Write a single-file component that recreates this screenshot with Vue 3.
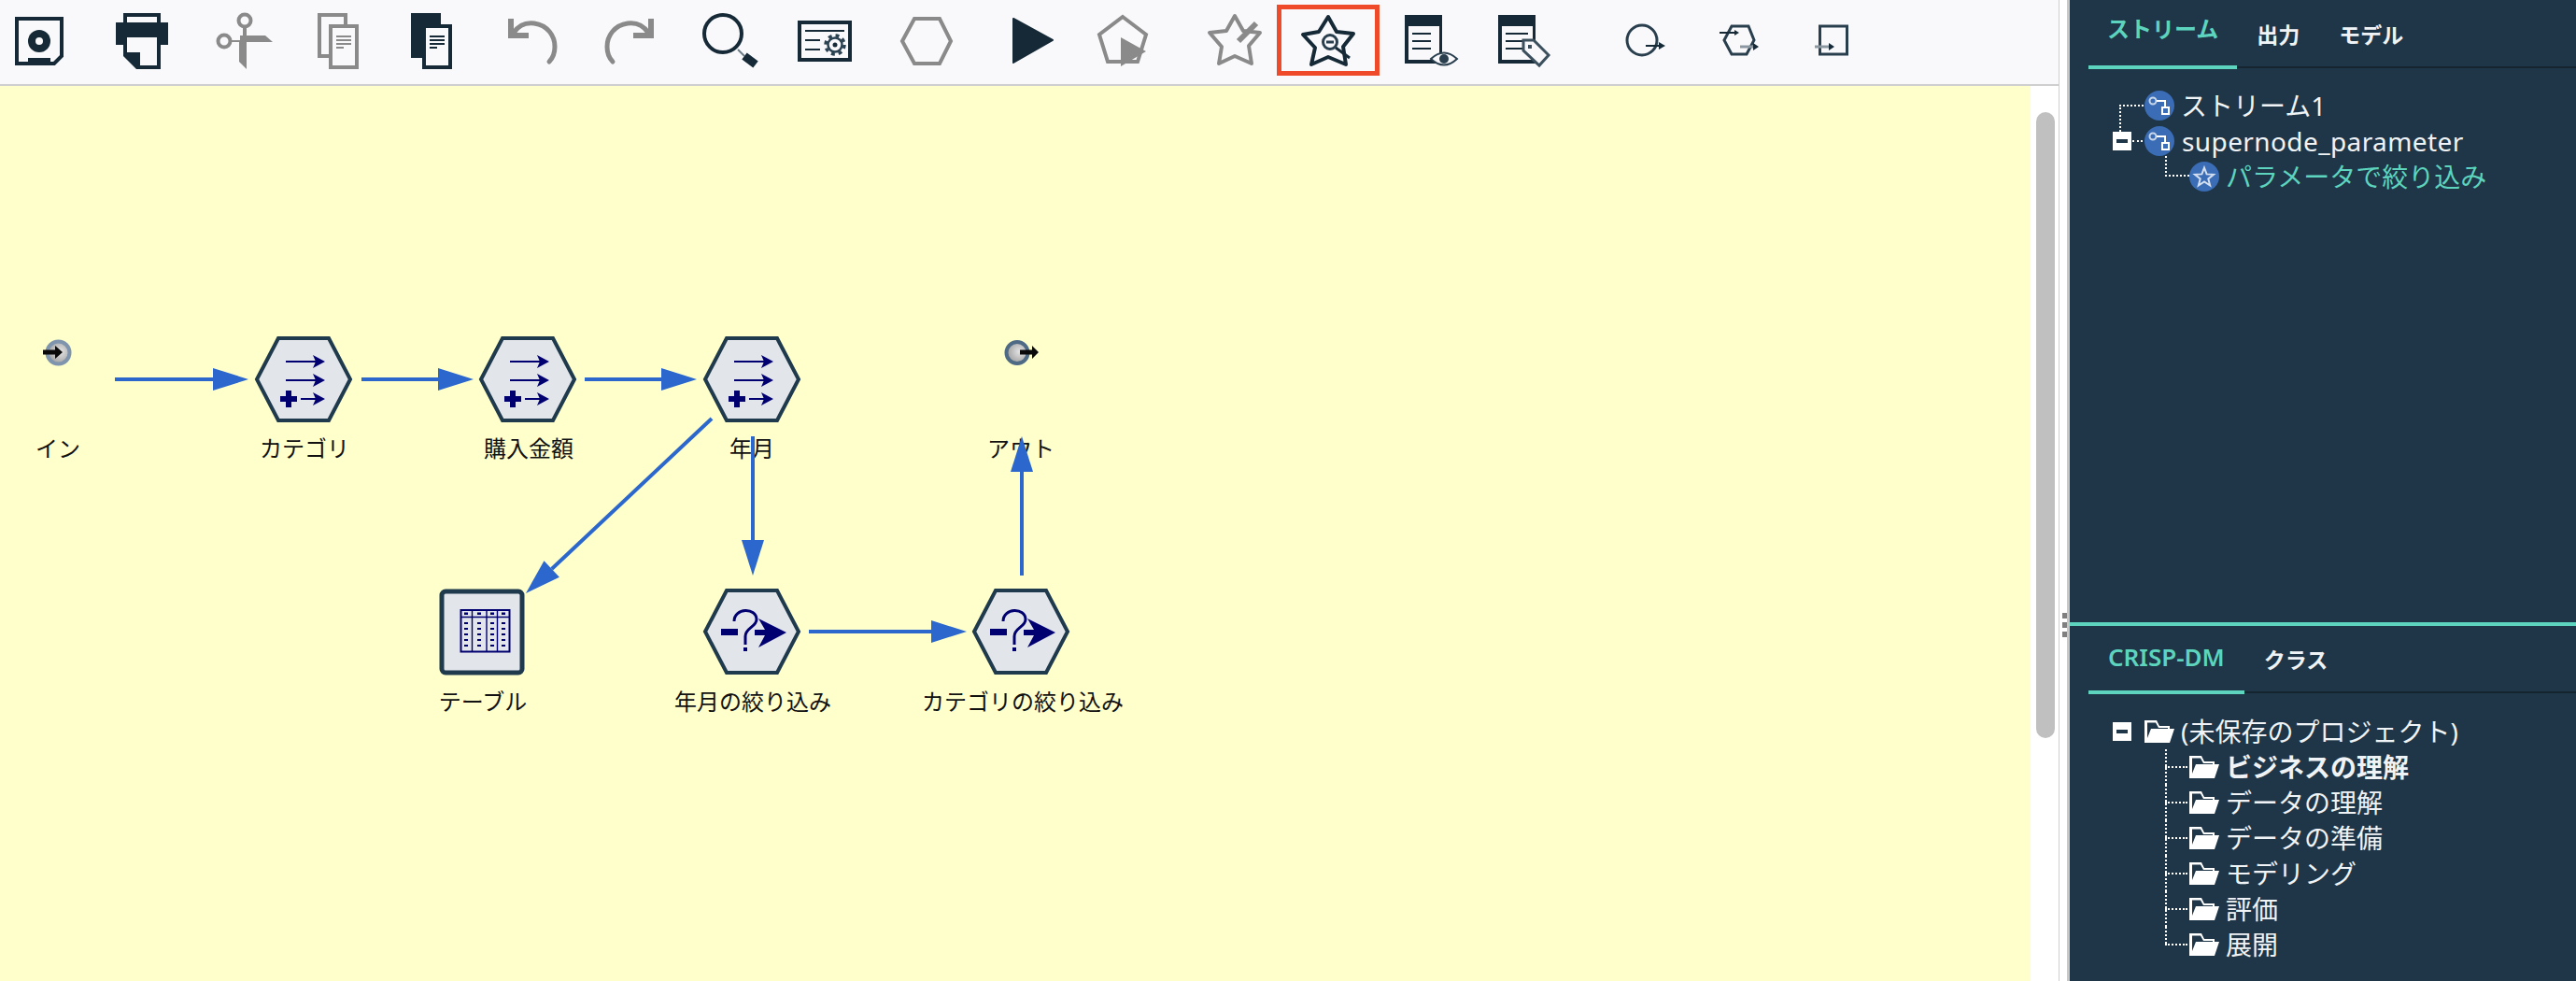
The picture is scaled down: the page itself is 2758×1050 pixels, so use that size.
<script setup>
const fieldNodes = [{ x: 325, y: 406 }, { x: 565, y: 406 }, { x: 805, y: 406 }]
const filterNodes = [{ x: 805, y: 676 }, { x: 1093, y: 676 }]

const labels = [
  { text: 'イン', x: 62, y: 489 },
  { text: 'カテゴリ', x: 326, y: 489 },
  { text: '購入金額', x: 566, y: 489 },
  { text: '年月', x: 805, y: 489 },
  { text: 'アウト', x: 1093, y: 489 },
  { text: 'テーブル', x: 517, y: 760 },
  { text: '年月の絞り込み', x: 806, y: 760 },
  { text: 'カテゴリの絞り込み', x: 1095, y: 760 }
]

// line runs from the tail to the base of the head, head length 38
const arrows = [
  [123, 406, 266, 406],
  [387, 406, 507, 406],
  [626, 406, 746, 406],
  [762, 448, 563, 635],
  [806, 467, 806, 616],
  [866, 676, 1035, 676],
  [1094, 616, 1094, 467]
].map(([x1, y1, x2, y2]) => {
  const len = Math.hypot(x2 - x1, y2 - y1)
  const ux = (x2 - x1) / len
  const uy = (y2 - y1) / len
  const bx = x2 - ux * 38
  const by = y2 - uy * 38
  return {
    x1,
    y1,
    bx,
    by,
    head: `${x2},${y2} ${bx - uy * 12},${by + ux * 12} ${bx + uy * 12},${by - ux * 12}`
  }
})

const tableRows = [667, 673, 679, 685, 691]
const tableCols = [499, 513, 527, 539]

const phases = [
  { name: 'ビジネスの理解', bold: true },
  { name: 'データの理解' },
  { name: 'データの準備' },
  { name: 'モデリング' },
  { name: '評価' },
  { name: '展開' }
]
</script>

<template>
  <div class="app">
    <div class="main">
      <div class="toolbar">
        <!-- save -->
        <svg class="tool i-disk" viewBox="14 0 56 90">
          <path class="dark-line" d="M18 20H66V60L58 68H18Z" />
          <circle cx="42" cy="44" r="12" class="dark" />
          <circle cx="42" cy="44" r="4" fill="#f9f9fc" />
          <rect x="30" y="62" width="24" height="6" class="dark" />
        </svg>
        <!-- print -->
        <svg class="tool i-print" viewBox="122 0 60 90">
          <path class="dark-line" d="M134 26V16H170V26" />
          <rect x="124" y="24" width="56" height="24" class="dark" />
          <path d="M132 40H172V74H146L132 60Z" class="dark" />
          <path d="M136 40H168V70H150V56H136Z" fill="#f9f9fc" />
        </svg>
        <!-- cut -->
        <svg class="tool i-cut" viewBox="230 0 64 90">
          <circle cx="262" cy="22" r="6.5" class="gray-line" />
          <circle cx="240" cy="44" r="6.5" class="gray-line" />
          <path d="M260 29H264V40H260ZM247 43H258V45H247Z" class="gray" />
          <path d="M257 38H284L292 45H257Z" class="gray" />
          <path d="M256 44H264V74L256 66Z" class="gray" />
        </svg>
        <!-- copy -->
        <svg class="tool i-copy" viewBox="338 0 48 90">
          <path class="gray-line" d="M370 26V16H342V60H354" />
          <rect x="354" y="28" width="28" height="44" class="gray-line" />
          <path class="gray-thin" d="M360 39H376M360 43H376M360 47H376M360 51H368" />
        </svg>
        <!-- paste -->
        <svg class="tool i-paste" viewBox="438 0 48 90">
          <rect x="440" y="14" width="32" height="48" class="dark" />
          <rect x="454" y="28" width="28" height="44" fill="#f9f9fc" stroke="#152936" stroke-width="4" />
          <path class="dark-thin" d="M460 39H476M460 43H476M460 47H476M460 51H468" />
        </svg>
        <!-- undo -->
        <svg class="tool i-undo" viewBox="542 0 58 90">
          <path d="M544 20H550V35H566V41H544Z" class="gray" />
          <path class="gray-round" d="M550 35C556 26 564 24 572 25C586 27 594 38 594 50C594 56 592 62 588 66" />
        </svg>
        <!-- redo -->
        <svg class="tool i-redo" viewBox="644 0 58 90">
          <path d="M700 20H694V35H678V41H700Z" class="gray" />
          <path class="gray-round" d="M694 35C688 26 680 24 672 25C658 27 650 38 650 50C650 56 652 62 656 66" />
        </svg>
        <!-- find -->
        <svg class="tool i-find" viewBox="750 0 66 90">
          <circle cx="774" cy="36" r="20" class="dark-line" />
          <path d="M790 53L797 60" stroke="#6b7b86" stroke-width="2" />
          <path d="M797 60L809 69" stroke="#152936" stroke-width="9" />
        </svg>
        <!-- stream properties -->
        <svg class="tool i-props" viewBox="852 0 62 90">
          <rect x="856" y="24" width="54" height="40" class="dark-line" />
          <path class="dark-thin" d="M862 33H904M862 43H878M862 53H878" />
          <circle cx="894" cy="48" r="10" fill="none" stroke="#2b4252" stroke-width="3.5" stroke-dasharray="3.9 4" />
          <circle cx="894" cy="48" r="7.5" fill="none" stroke="#2b4252" stroke-width="2.5" />
          <circle cx="894" cy="48" r="2.5" class="dark" />
        </svg>
        <!-- hexagon -->
        <svg class="tool i-hex" viewBox="962 0 60 90">
          <path class="gray-line" d="M966 44L979 20H1006L1018 44L1006 68H979Z" />
        </svg>
        <!-- run -->
        <svg class="tool i-run" viewBox="1082 0 48 90">
          <path d="M1085 20L1127 43L1085 67Z" class="dark" stroke="#152936" stroke-width="2" stroke-linejoin="round" />
        </svg>
        <!-- run selection -->
        <svg class="tool i-runsel" viewBox="1172 0 58 90">
          <path class="gray-line" d="M1202 18L1227 37L1218 66H1186L1177 37Z" />
          <path d="M1200 40L1227 55L1200 71Z" class="gray" />
        </svg>
        <!-- create supernode -->
        <svg class="tool i-wand" viewBox="1290 0 64 90">
          <path class="gray-star" d="M1322 17L1331 33L1349 35L1337 49L1340 68L1322 60L1305 68L1308 50L1295 35L1313 33Z" />
          <path d="M1326 44L1345 25" stroke="#8a8a8a" stroke-width="6" />
        </svg>
        <!-- zoom into supernode, marked with the red frame -->
        <div class="active-tool">
          <svg viewBox="1372 10 100 66">
            <path class="dark-star" d="M1422 18L1431 34L1449 36L1438 50L1441 69L1422 61L1404 69L1408 51L1395 37L1412 34Z" />
            <circle cx="1424" cy="45" r="7.5" fill="#f9f9fc" stroke="#2a3f4e" stroke-width="3" />
            <path d="M1420 45H1428" stroke="#2a3f4e" stroke-width="3" />
            <path d="M1430 51L1445 62" stroke="#152936" stroke-width="3" />
          </svg>
        </div>
        <!-- preview -->
        <svg class="tool i-doceye" viewBox="1502 0 60 90">
          <rect x="1504" y="16" width="40" height="52" class="dark" />
          <rect x="1508" y="28" width="33" height="36" fill="#f9f9fc" />
          <path class="dark-thin" d="M1512 36H1532M1512 44H1532M1512 52H1532" />
          <path d="M1532 63Q1546 50 1560 63Q1546 76 1532 63Z" fill="#f9f9fc" stroke="#2a3f4e" stroke-width="2" />
          <circle cx="1546" cy="63" r="5" fill="#2a3f4e" />
        </svg>
        <!-- annotation -->
        <svg class="tool i-doctag" viewBox="1602 0 60 90">
          <rect x="1604" y="16" width="40" height="52" class="dark" />
          <rect x="1608" y="28" width="33" height="36" fill="#f9f9fc" />
          <path class="dark-thin" d="M1612 36H1636M1612 44H1630M1612 52H1630" />
          <path d="M1631 43H1642L1658 59L1648 70L1631 54Z" fill="#f9f9fc" stroke="#3b4f5d" stroke-width="3" />
          <rect x="1636" y="48" width="4" height="4" fill="#3b4f5d" />
        </svg>
        <!-- supernode in/out tools -->
        <svg class="tool i-in" viewBox="1738 0 48 90">
          <circle cx="1758" cy="43" r="16" fill="none" stroke="#2a3f4e" stroke-width="3" />
          <path d="M1762 49H1778" stroke="#152936" stroke-width="2" />
          <path d="M1776 45L1783 49L1776 53Z" class="dark" />
        </svg>
        <svg class="tool i-hexio" viewBox="1838 0 48 90">
          <path d="M1846 43L1854 28H1872L1878 43L1870 58H1854Z" fill="none" stroke="#2a3f4e" stroke-width="3" />
          <path d="M1841 35H1859" stroke="#152936" stroke-width="2" />
          <path d="M1857 32L1862 35L1857 38Z" class="dark" />
          <path d="M1863 50H1878" stroke="#8c98a1" stroke-width="3" />
          <path d="M1877 46L1883 50L1877 54Z" class="dark" />
        </svg>
        <svg class="tool i-rectio" viewBox="1941 0 42 90">
          <rect x="1948.5" y="28" width="29" height="30" fill="none" stroke="#2a3f4e" stroke-width="3" />
          <path d="M1943 50H1958" stroke="#8c98a1" stroke-width="3" />
          <path d="M1958 46L1964 50L1958 54Z" class="dark" />
        </svg>
      </div>

      <div class="work-area">
        <div class="canvas">
          <svg class="stream" viewBox="0 92 2174 958">
            <defs>
              <radialGradient id="ball" cx="0.6" cy="0.45" r="0.65">
                <stop offset="0" stop-color="#e4e4e4" />
                <stop offset="1" stop-color="#989898" />
              </radialGradient>
            </defs>

            <text v-for="l in labels" :key="l.text" class="node-label" :x="l.x" :y="l.y">{{ l.text }}</text>

            <!-- input terminal -->
            <circle cx="62.5" cy="377.5" r="12" fill="url(#ball)" stroke="#7f95ad" stroke-width="4" />
            <path d="M46 374.5H59V370L67 377L59 384V379.5H46Z" fill="#0a0a0a" />
            <!-- output terminal -->
            <circle cx="1089" cy="377.5" r="11.5" fill="url(#ball)" stroke="#4e6a85" stroke-width="4" />
            <path d="M1092 374.5H1105V370L1112 377L1105 384V379.5H1092Z" fill="#0a0a0a" />

            <!-- field derive nodes -->
            <g v-for="n in fieldNodes" :key="n.x" :transform="`translate(${n.x} ${n.y})`">
              <polygon class="node" points="-50,0 -27,-44 27,-44 50,0 27,44 -27,44" />
              <g class="glyph-line">
                <path d="M-19 -19H20M-19 1H20M-3 21H20" />
              </g>
              <path class="glyph" d="M10 -26L23 -19L10 -12L13 -19ZM10 -6L23 1L10 8L13 1ZM10 14L23 21L10 28L13 21Z" />
              <path class="glyph" d="M-25 18H-19V12H-13V18H-7V24H-13V30H-19V24H-25Z" />
            </g>

            <!-- table node -->
            <rect class="node table-node" x="473" y="633" width="86" height="87" rx="4" />
            <rect x="493.5" y="653" width="52" height="44.5" fill="none" stroke="#000070" stroke-width="2" />
            <path d="M493 660.5H546M505.5 653V697M521 653V697M532.5 653V697" stroke="#000070" stroke-width="1.4" />
            <g v-for="c in tableCols" :key="c">
              <rect :x="c - 2" y="655.5" width="4" height="2.5" fill="#000070" />
              <rect v-for="r in tableRows" :key="r" :x="c - 2" :y="r - 1" width="4" height="2" fill="#000070" />
            </g>

            <!-- filter nodes -->
            <g v-for="n in filterNodes" :key="n.x" :transform="`translate(${n.x} ${n.y})`">
              <polygon class="node" points="-50,0 -27,-44 27,-44 50,0 27,44 -27,44" />
              <path class="glyph" d="M-33 -3H-15V4H-33Z" />
              <path d="M-19 -11C-19 -26 5 -26 5 -13C5 -5 -7 -4 -7 5V14" fill="none" stroke="#000070" stroke-width="3" />
              <rect class="glyph" x="-9" y="17" width="4" height="4" />
              <path class="glyph" d="M7 -14L37 1L7 17L14 4H3V-2H14Z" />
            </g>

            <!-- links sit on top of the labels -->
            <g v-for="a in arrows" :key="a.head">
              <line class="link" :x1="a.x1" :y1="a.y1" :x2="a.bx" :y2="a.by" />
              <polygon class="link-head" :points="a.head" />
            </g>
          </svg>
        </div>
        <div class="scroll-track">
          <div class="scroll-thumb"></div>
        </div>
      </div>
    </div>

    <div class="divider">
      <span class="grip"></span>
      <span class="grip"></span>
      <span class="grip"></span>
    </div>

    <div class="side">
      <div class="pane pane-top">
        <div class="tabs">
          <span class="tab active">ストリーム</span>
          <span class="tab">出力</span>
          <span class="tab">モデル</span>
        </div>
        <div class="tree stream-tree">
          <div class="row lvl0 link-down">
            <svg class="ico" viewBox="0 0 32 32">
              <circle cx="16" cy="16" r="16" fill="#3a6db5" />
              <circle cx="9" cy="11" r="3.5" fill="none" stroke="#c8d6ea" stroke-width="2" />
              <path d="M13 11H22V18M19 18H26V25H19Z" fill="none" stroke="#fff" stroke-width="2" />
            </svg>
            <span>ストリーム1</span>
          </div>
          <div class="row lvl0">
            <span class="toggle"></span>
            <span class="toggle-dots"></span>
            <svg class="ico" viewBox="0 0 32 32">
              <circle cx="16" cy="16" r="16" fill="#3a6db5" />
              <circle cx="9" cy="11" r="3.5" fill="none" stroke="#c8d6ea" stroke-width="2" />
              <path d="M13 11H22V18M19 18H26V25H19Z" fill="none" stroke="#fff" stroke-width="2" />
            </svg>
            <span class="latin">supernode_parameter</span>
          </div>
          <div class="row lvl1 elbow current">
            <svg class="ico" viewBox="0 0 32 32">
              <circle cx="16" cy="16" r="16" fill="#3a6db5" />
              <path d="M16 6.5L18.6 13.4L26 13.8L20.3 18.4L22.2 25.5L16 21.5L9.8 25.5L11.7 18.4L6 13.8L13.4 13.4Z" fill="none" stroke="#d5dff0" stroke-width="2" />
            </svg>
            <span>パラメータで絞り込み</span>
          </div>
        </div>
      </div>

      <div class="pane pane-bottom">
        <div class="tabs">
          <span class="tab active crisp">CRISP-DM</span>
          <span class="tab">クラス</span>
        </div>
        <div class="tree crisp-tree">
          <div class="row lvl0">
            <span class="toggle"></span>
            <svg class="ico folder" viewBox="0 0 32 24">
              <path fill="#fff" d="M0 0H13L16 6H27V9H32L27 24H0Z" />
              <path fill="#1f3649" d="M3 2.5H12L15 8H25V9H7L3 19Z" />
            </svg>
            <span>(未保存のプロジェクト)</span>
          </div>
          <div v-for="p in phases" :key="p.name" class="row lvl1 branch" :class="{ strong: p.bold }">
            <svg class="ico folder" viewBox="0 0 32 24">
              <path fill="#fff" d="M0 0H13L16 6H27V9H32L27 24H0Z" />
              <path fill="#1f3649" d="M3 2.5H12L15 8H25V9H7L3 19Z" />
            </svg>
            <span>{{ p.name }}</span>
          </div>
        </div>
      </div>
    </div>
  </div>
</template>

<style>
html,
body {
  margin: 0;
  background: #fff;
}
</style>

<style scoped>
.app {
  display: flex;
  width: 2758px;
  height: 1050px;
  overflow: hidden;
  font-family: "Noto Sans", "Noto Sans CJK JP", sans-serif;
}

.main {
  display: flex;
  flex-direction: column;
  flex: 0 0 2204px;
}

.toolbar {
  display: flex;
  align-items: flex-start;
  flex: 0 0 90px;
  background: #f9f9fc;
  border-bottom: 2px solid #cfcfcf;
}

.tool {
  flex: none;
  height: 90px;
}

.i-disk { width: 56px; margin-left: 14px; }
.i-print { width: 60px; margin-left: 52px; }
.i-cut { width: 64px; margin-left: 48px; }
.i-copy { width: 48px; margin-left: 44px; }
.i-paste { width: 48px; margin-left: 52px; }
.i-undo { width: 58px; margin-left: 56px; }
.i-redo { width: 58px; margin-left: 44px; }
.i-find { width: 66px; margin-left: 48px; }
.i-props { width: 62px; margin-left: 36px; }
.i-hex { width: 60px; margin-left: 48px; }
.i-run { width: 48px; margin-left: 60px; }
.i-runsel { width: 58px; margin-left: 42px; }
.i-wand { width: 64px; margin-left: 60px; }
.i-doceye { width: 60px; margin-left: 25px; }
.i-doctag { width: 60px; margin-left: 40px; }
.i-in { width: 48px; margin-left: 76px; }
.i-hexio { width: 48px; margin-left: 52px; }
.i-rectio { width: 42px; margin-left: 55px; }

.active-tool {
  flex: none;
  box-sizing: border-box;
  width: 110px;
  height: 76px;
  margin: 5px 0 0 13px;
  border: 5px solid #ef4a2a;
}

.active-tool svg {
  display: block;
  width: 100px;
  height: 66px;
}

.dark { fill: #152936; }
.gray { fill: #8a8a8a; }

.dark-line,
.gray-line {
  fill: none;
  stroke-width: 4;
}

.dark-line { stroke: #152936; }
.gray-line { stroke: #8a8a8a; }

.dark-thin,
.gray-thin {
  fill: none;
  stroke-width: 2;
}

.dark-thin { stroke: #152936; }
.gray-thin { stroke: #8a8a8a; }

.gray-round {
  fill: none;
  stroke: #8a8a8a;
  stroke-width: 5;
  stroke-linecap: round;
}

.gray-star,
.dark-star {
  fill: none;
  stroke-width: 4;
  stroke-linejoin: round;
}

.gray-star { stroke: #8a8a8a; }
.dark-star { stroke: #152936; }

.work-area {
  display: flex;
  flex: 1;
  min-height: 0;
}

.canvas {
  flex: 0 0 2174px;
  background: #ffffcb;
}

.stream {
  display: block;
  width: 2174px;
  height: 958px;
}

.node-label {
  font-family: "Noto Sans CJK JP", sans-serif;
  font-size: 24px;
  fill: #111;
  text-anchor: middle;
}

.node {
  fill: #e2e5ea;
  stroke: #1f3a4d;
  stroke-width: 4;
}

.table-node {
  stroke-width: 5;
}

.glyph {
  fill: #000070;
}

.glyph-line path {
  fill: none;
  stroke: #000070;
  stroke-width: 2;
}

.link {
  stroke: #2b67cc;
  stroke-width: 4;
}

.link-head {
  fill: #2b67cc;
}

.scroll-track {
  flex: 1;
  padding: 28px 4px 0 6px;
}

.scroll-thumb {
  height: 670px;
  background: #c0c0c0;
  border-radius: 10px;
}

.divider {
  position: relative;
  box-sizing: border-box;
  flex: 0 0 12px;
  border-left: 1px solid #cfcfcf;
  border-right: 3px solid #c8c8c8;
}

.grip {
  display: block;
  position: relative;
  top: 656px;
  left: 3px;
  width: 5px;
  height: 6px;
  margin-bottom: 4px;
  background: #808080;
}

.side {
  display: flex;
  flex-direction: column;
  flex: 1;
  background: #1f3649;
  color: #f0f3f5;
}

.pane-top {
  flex: 0 0 666px;
}

.pane-bottom {
  flex: 1;
  border-top: 4px solid #5dd4bd;
}

.tabs {
  display: flex;
  align-items: flex-end;
  margin-left: 20px;
  height: 72px;
  border-bottom: 2px solid #14252f;
  box-sizing: content-box;
  font-size: 23px;
  font-weight: 700;
}

.pane-top .tabs {
  height: 71px;
}

.pane-bottom .tabs {
  height: 70px;
}

.tab {
  margin-bottom: -2px;
  padding: 0 21px 20px;
  line-height: 32px;
}

.tab.active {
  padding: 0 20px 23px;
  font-size: 24px;
  color: #5dd4bd;
  border-bottom: 4px solid #5dd4bd;
  margin-bottom: -3px;
}

.tab.crisp {
  font-size: 26px;
  font-weight: 600;
  padding: 0 21px 20px;
}

.tree {
  font-size: 28px;
  line-height: 38px;
}

.stream-tree {
  padding-top: 21px;
}

.crisp-tree {
  padding-top: 22px;
}

.row {
  position: relative;
  display: flex;
  align-items: center;
  height: 38px;
  white-space: nowrap;
}

.lvl0 {
  padding-left: 80px;
}

.lvl1 {
  padding-left: 128px;
}

.ico {
  flex: none;
  width: 32px;
  height: 32px;
  margin-right: 7px;
}

.folder {
  height: 24px;
}

.latin {
  margin-left: 1px;
  letter-spacing: 0.4px;
}

.current {
  color: #5dd4bd;
}

.strong {
  font-weight: 700;
}

.toggle {
  position: absolute;
  left: 46px;
  top: 9px;
  width: 20px;
  height: 20px;
  background: #fff;
}

.toggle::after {
  content: "";
  position: absolute;
  left: 4px;
  top: 8px;
  width: 12px;
  height: 4px;
  background: #1f3649;
}

.toggle-dots {
  position: absolute;
  left: 67px;
  top: 18px;
  width: 11px;
  border-top: 2px dotted #fff;
}

/* dotted tree connectors */
.link-down::before {
  content: "";
  position: absolute;
  left: 53px;
  top: 18px;
  width: 24px;
  height: 27px;
  border-left: 2px dotted #fff;
  border-top: 2px dotted #fff;
}

.elbow::before {
  content: "";
  position: absolute;
  left: 102px;
  top: -3px;
  width: 24px;
  height: 20px;
  border-left: 2px dotted #fff;
  border-bottom: 2px dotted #fff;
}

.branch::before {
  content: "";
  position: absolute;
  left: 102px;
  top: 0;
  height: 100%;
  border-left: 2px dotted #fff;
}

.branch::after {
  content: "";
  position: absolute;
  left: 102px;
  top: 18px;
  width: 24px;
  border-top: 2px dotted #fff;
}

.branch:last-child::before {
  height: 18px;
}
</style>
